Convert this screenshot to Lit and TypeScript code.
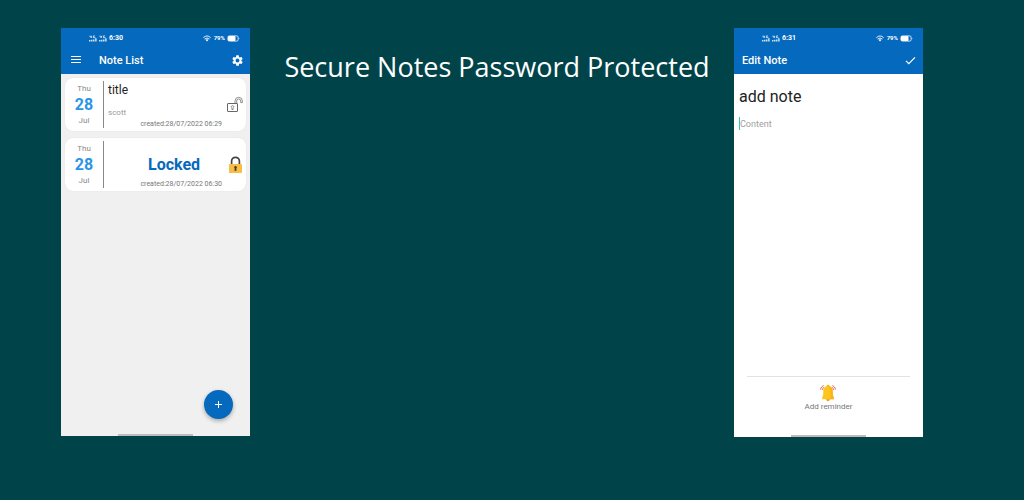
import { LitElement, html, css, svg } from "lit";
import { customElement, property } from "lit/decorators.js";

const signal = svg`
  <path d="M1 .6V2h1.6M2.4 .8v2M6 .9H4.400v1.800H6V1.900" fill="none" stroke="currentColor" stroke-width=".7"/>
  <path d="M.2 5h1.200v1.400H.2zM2.200 4.700h1.200v1.700H2.200zM4.200 4.400h1.200v2H4.200zM6.300 3.300h1.200v3.100H6.300z" fill="currentColor"/>`;

@customElement("status-bar")
export class StatusBar extends LitElement {
  @property() time = "";

  static styles = css`
    :host {
      display: flex;
      align-items: center;
      justify-content: space-between;
      height: 20px;
      padding: 0 10px 0 28px;
      font-size: 7px;
      font-weight: 700;
      line-height: 8px;
    }
    .group {
      display: flex;
      align-items: center;
      gap: 2px;
    }
    .percent {
      font-size: 6px;
      margin-left: 1px;
    }
    svg {
      display: block;
    }
  `;

  render() {
    return html`
      <div class="group">
        <svg width="8" height="7" viewBox="0 0 8 7">${signal}</svg>
        <svg width="8" height="7" viewBox="0 0 8 7">${signal}</svg>
        <span>${this.time}</span>
      </div>
      <div class="group">
        <svg width="8" height="7" viewBox="0 0 8 7">
          <path d="M.4 2.6Q4-.7 7.6 2.6M1.6 4Q4 2 6.4 4" fill="none" stroke="currentColor" stroke-width=".9" />
          <path d="M2.5 4.8Q4 3.7 5.5 4.8L4 6.6z" fill="currentColor" />
        </svg>
        <span class="percent">79%</span>
        <svg width="13" height="7" viewBox="0 0 13 7">
          <rect x=".9" y=".9" width="10.2" height="5.2" rx="1.5" fill="none" stroke="currentColor" stroke-width=".8" />
          <rect x="1" y="1" width="7.5" height="5" rx="1" fill="currentColor" />
          <path d="M11.8 2.4q1.2 1.1 0 2.2z" fill="currentColor" />
        </svg>
      </div>
    `;
  }
}

@customElement("note-card")
export class NoteCard extends LitElement {
  @property() heading = "";
  @property() body = "";
  @property() created = "";
  @property({ type: Boolean }) locked = false;

  static styles = css`
    :host {
      display: flex;
      min-height: 47px;
      padding: 3px 0;
      background: #fff;
      border-radius: 8px;
      box-shadow: 0 0 1px rgba(0, 0, 0, 0.12);
    }
    .date {
      display: flex;
      flex-direction: column;
      align-items: center;
      justify-content: space-between;
      box-sizing: border-box;
      width: 39px;
      padding: 3px 0 2px;
      border-right: 1px solid #888;
      color: #888;
      font-size: 8px;
      line-height: 10px;
    }
    .day {
      color: #2b94e6;
      font-size: 16px;
      font-weight: 700;
      line-height: 18px;
    }
    .main {
      flex: 1;
      display: grid;
      grid-template-columns: 1fr 18px;
      grid-template-rows: 16px 1fr 10px;
      padding: 0 2px 0 4px;
    }
    .heading {
      margin: 0;
      color: #222;
      font-size: 12px;
      font-weight: 400;
      line-height: 18px;
    }
    .body {
      grid-area: 2 / 1;
      align-self: end;
      margin: 0 0 1px;
      color: #999;
      font-size: 8px;
      line-height: 8px;
    }
    .created {
      grid-area: 3 / 1;
      color: #777;
      font-size: 7px;
      line-height: 12px;
      text-align: right;
      padding-right: 4px;
      white-space: nowrap;
    }
    .secret {
      grid-area: 1 / 1 / 4 / 3;
      place-self: center;
      margin: 0;
      padding-right: 4px;
      color: #0569bd;
      font-size: 16px;
      font-weight: 700;
      line-height: 20px;
    }
    .lock {
      grid-area: 1 / 2 / 4 / 3;
      place-self: center;
      display: block;
    }
  `;

  render() {
    return html`
      <div class="date"><span>Thu</span><span class="day">28</span><span>Jul</span></div>
      <div class="main">
        ${this.locked
          ? html`<h2 class="secret">Locked</h2>`
          : html`<h2 class="heading">${this.heading}</h2><p class="body">${this.body}</p>`}
        <span class="created">created:${this.created}</span>
        ${this.locked
          ? html`<svg class="lock" width="18" height="18" viewBox="0 0 18 18">
              <path d="M5.600 9V5.200a3.900 3.900 0 0 1 7.800 0V9" fill="none" stroke="#434343" stroke-width="1.700" />
              <rect x="3" y="8" width="13" height="9" rx="1" fill="#f8bd45" />
              <path d="M9.500 10a1.400 1.400 0 0 1 .8 2.500l.3 2.200H8.400l.3-2.200A1.400 1.400 0 0 1 9.500 10z" fill="#4a3b24" />
            </svg>`
          : html`<svg class="lock" width="18" height="18" viewBox="0 0 18 18" fill="none" stroke="#666">
              <rect x="1.500" y="7.500" width="10" height="8" rx=".5" />
              <path d="M9 7.500V5a3.700 3.700 0 0 1 7.400 0v1.600h-1.700V5a2 2 0 0 0-4 0v2.500" stroke-width=".7" />
              <path d="M6.500 9.700a1 1 0 0 1 .6 1.900v1.900H5.900v-1.900a1 1 0 0 1 .6-1.900z" stroke-width=".7" />
            </svg>`}
      </div>
    `;
  }
}

@customElement("app-root")
export class AppRoot extends LitElement {
  static styles = css`
    :host {
      display: grid;
      grid-template-columns: 189fr 484fr 189fr;
      align-items: start;
      box-sizing: border-box;
      min-height: 100vh;
      padding: 28px 101px 28px 61px;
      background: #00444a;
      font-family: Roboto, sans-serif;
    }
    .title {
      margin: 0;
      padding: 19px 0 0 10px;
      color: #fff;
      font-family: "Open Sans", "Noto Sans", sans-serif;
      font-size: 27px;
      font-weight: 400;
      line-height: 40px;
      text-align: center;
    }
    .phone {
      position: relative;
      display: flex;
      flex-direction: column;
      aspect-ratio: 189 / 408;
      background: #f0f0f0;
    }
    .editor {
      aspect-ratio: 189 / 409;
      background: #fff;
    }
    .header {
      background: #0569bd;
      color: #fff;
    }
    .toolbar {
      display: flex;
      align-items: center;
      box-sizing: border-box;
      height: 26px;
      padding: 0 6px 2px 8px;
    }
    .toolbar h1 {
      flex: 1;
      margin: 0;
      font-size: 11px;
      font-weight: 500;
      line-height: 15px;
    }
    button {
      display: grid;
      place-items: center;
      margin: 0;
      padding: 0;
      border: 0;
      background: none;
      color: inherit;
      font: inherit;
    }
    .menu {
      margin-right: 16px;
    }
    svg {
      display: block;
    }
    .list {
      flex: 1;
      display: flex;
      flex-direction: column;
      gap: 7px;
      padding: 4px;
    }
    .fab {
      position: absolute;
      right: 17px;
      bottom: 17px;
      width: 29px;
      height: 29px;
      border-radius: 50%;
      background: #0569bd;
      color: #fff;
      box-shadow: 0 2px 4px rgba(0, 0, 0, 0.3);
    }
    .handle {
      align-self: center;
      width: 40%;
      height: 2px;
      background: #bcbcbc;
    }
    .form {
      flex: 1;
      display: flex;
      flex-direction: column;
      padding: 13px 5px 0;
    }
    .field {
      display: block;
      box-sizing: border-box;
      width: 100%;
      margin: 0;
      padding: 0;
      border: 0;
      outline: 0;
      background: none;
      resize: none;
      font-family: inherit;
    }
    .name {
      height: 20px;
      color: #222;
      font-size: 16px;
      line-height: 20px;
    }
    .content {
      height: 13px;
      margin-top: 10px;
      border-left: 1px solid #2bcdb4;
      font-size: 9px;
      line-height: 14px;
      overflow: hidden;
    }
    .content::placeholder {
      color: #a0a0a0;
      opacity: 1;
    }
    .footer {
      margin: 0 13px;
      padding: 7px 0 23px;
      border-top: 1px solid #e2e2e2;
    }
    .reminder {
      margin: 0 auto;
      color: #777;
      font-size: 8px;
      line-height: 10px;
    }
  `;

  render() {
    return html`
      <section class="phone">
        <header class="header">
          <status-bar time="6:30"></status-bar>
          <div class="toolbar">
            <button class="menu" aria-label="Menu">
              <svg width="14" height="12" viewBox="0 0 14 12">
                <path d="M2 2.500h10M2 5.500h10M2 8.500h10" stroke="#fff" stroke-width="1" />
              </svg>
            </button>
            <h1>Note List</h1>
            <button aria-label="Settings">
              <svg width="13" height="13" viewBox="0 0 24 24">
                <path fill="#fff" d="M19.14 12.94c.04-.3.06-.61.06-.94 0-.32-.02-.64-.07-.94l2.03-1.58a.49.49 0 0 0 .12-.61l-1.92-3.32a.49.49 0 0 0-.59-.22l-2.39.96a7 7 0 0 0-1.62-.94l-.36-2.54a.48.48 0 0 0-.48-.41h-3.84a.47.47 0 0 0-.47.41l-.36 2.54c-.59.24-1.13.57-1.62.94l-2.39-.96a.48.48 0 0 0-.59.22L2.74 8.87a.47.47 0 0 0 .12.61l2.03 1.58a6 6 0 0 0-.02 1.88l-2.03 1.58a.49.49 0 0 0-.12.61l1.92 3.32c.12.22.37.29.59.22l2.39-.96c.5.38 1.03.7 1.62.94l.36 2.54c.05.24.24.41.48.41h3.84c.24 0 .44-.17.47-.41l.36-2.54a7 7 0 0 0 1.62-.94l2.39.96c.22.08.47 0 .59-.22l1.92-3.32a.47.47 0 0 0-.12-.61zM12 15.6A3.6 3.6 0 1 1 12 8.4a3.6 3.6 0 0 1 0 7.2z" />
              </svg>
            </button>
          </div>
        </header>
        <div class="list">
          <note-card heading="title" body="scott" created="28/07/2022 06:29"></note-card>
          <note-card locked created="28/07/2022 06:30"></note-card>
        </div>
        <button class="fab" aria-label="Add note">
          <svg width="9" height="9" viewBox="0 0 9 9">
            <path d="M4.500 1v7M1 4.500h7" stroke="#fff" stroke-width="1" />
          </svg>
        </button>
        <div class="handle"></div>
      </section>

      <h1 class="title">Secure Notes Password Protected</h1>

      <section class="phone editor">
        <header class="header">
          <status-bar time="6:31"></status-bar>
          <div class="toolbar">
            <h1>Edit Note</h1>
            <button aria-label="Save">
              <svg width="13" height="13" viewBox="0 0 13 13">
                <path d="M2 6.800 4.800 9.600 11 3.300" fill="none" stroke="#fff" stroke-width="1.200" />
              </svg>
            </button>
          </div>
        </header>
        <div class="form">
          <input class="field name" aria-label="Title" .value=${"add note"} />
          <textarea class="field content" aria-label="Content" placeholder="Content" rows="1"></textarea>
        </div>
        <div class="footer">
          <button class="reminder">
            <svg width="18" height="18" viewBox="0 0 18 18">
              <path d="M4.600 1.500Q2 2.500 1.400 5.500M5.200 3.200Q3.600 4 3.200 6M13.400 1.500Q16 2.500 16.600 5.500M12.800 3.200Q14.400 4 14.800 6" fill="none" stroke="#e0675f" stroke-width="1" />
              <circle cx="9" cy="15.600" r="1.700" fill="#f09a18" />
              <circle cx="9" cy="2" r="1.300" fill="#f5ac1c" />
              <path d="M9 2c3.300 0 4.700 2.500 4.700 5.300 0 3.500.4 5 1.100 6.200v1.700H3.200v-1.700C4 12.300 4.300 10.800 4.300 7.300 4.300 4.500 5.700 2 9 2z" fill="#fdc61f" />
              <path d="M9 2c3.300 0 4.700 2.500 4.700 5.300 0 3.500.4 5 1.100 6.200v1.700h-4c1.400-4 1.200-10-1.800-13.200z" fill="#f8b51b" />
            </svg>
            <span>Add reminder</span>
          </button>
        </div>
        <div class="handle"></div>
      </section>
    `;
  }
}
